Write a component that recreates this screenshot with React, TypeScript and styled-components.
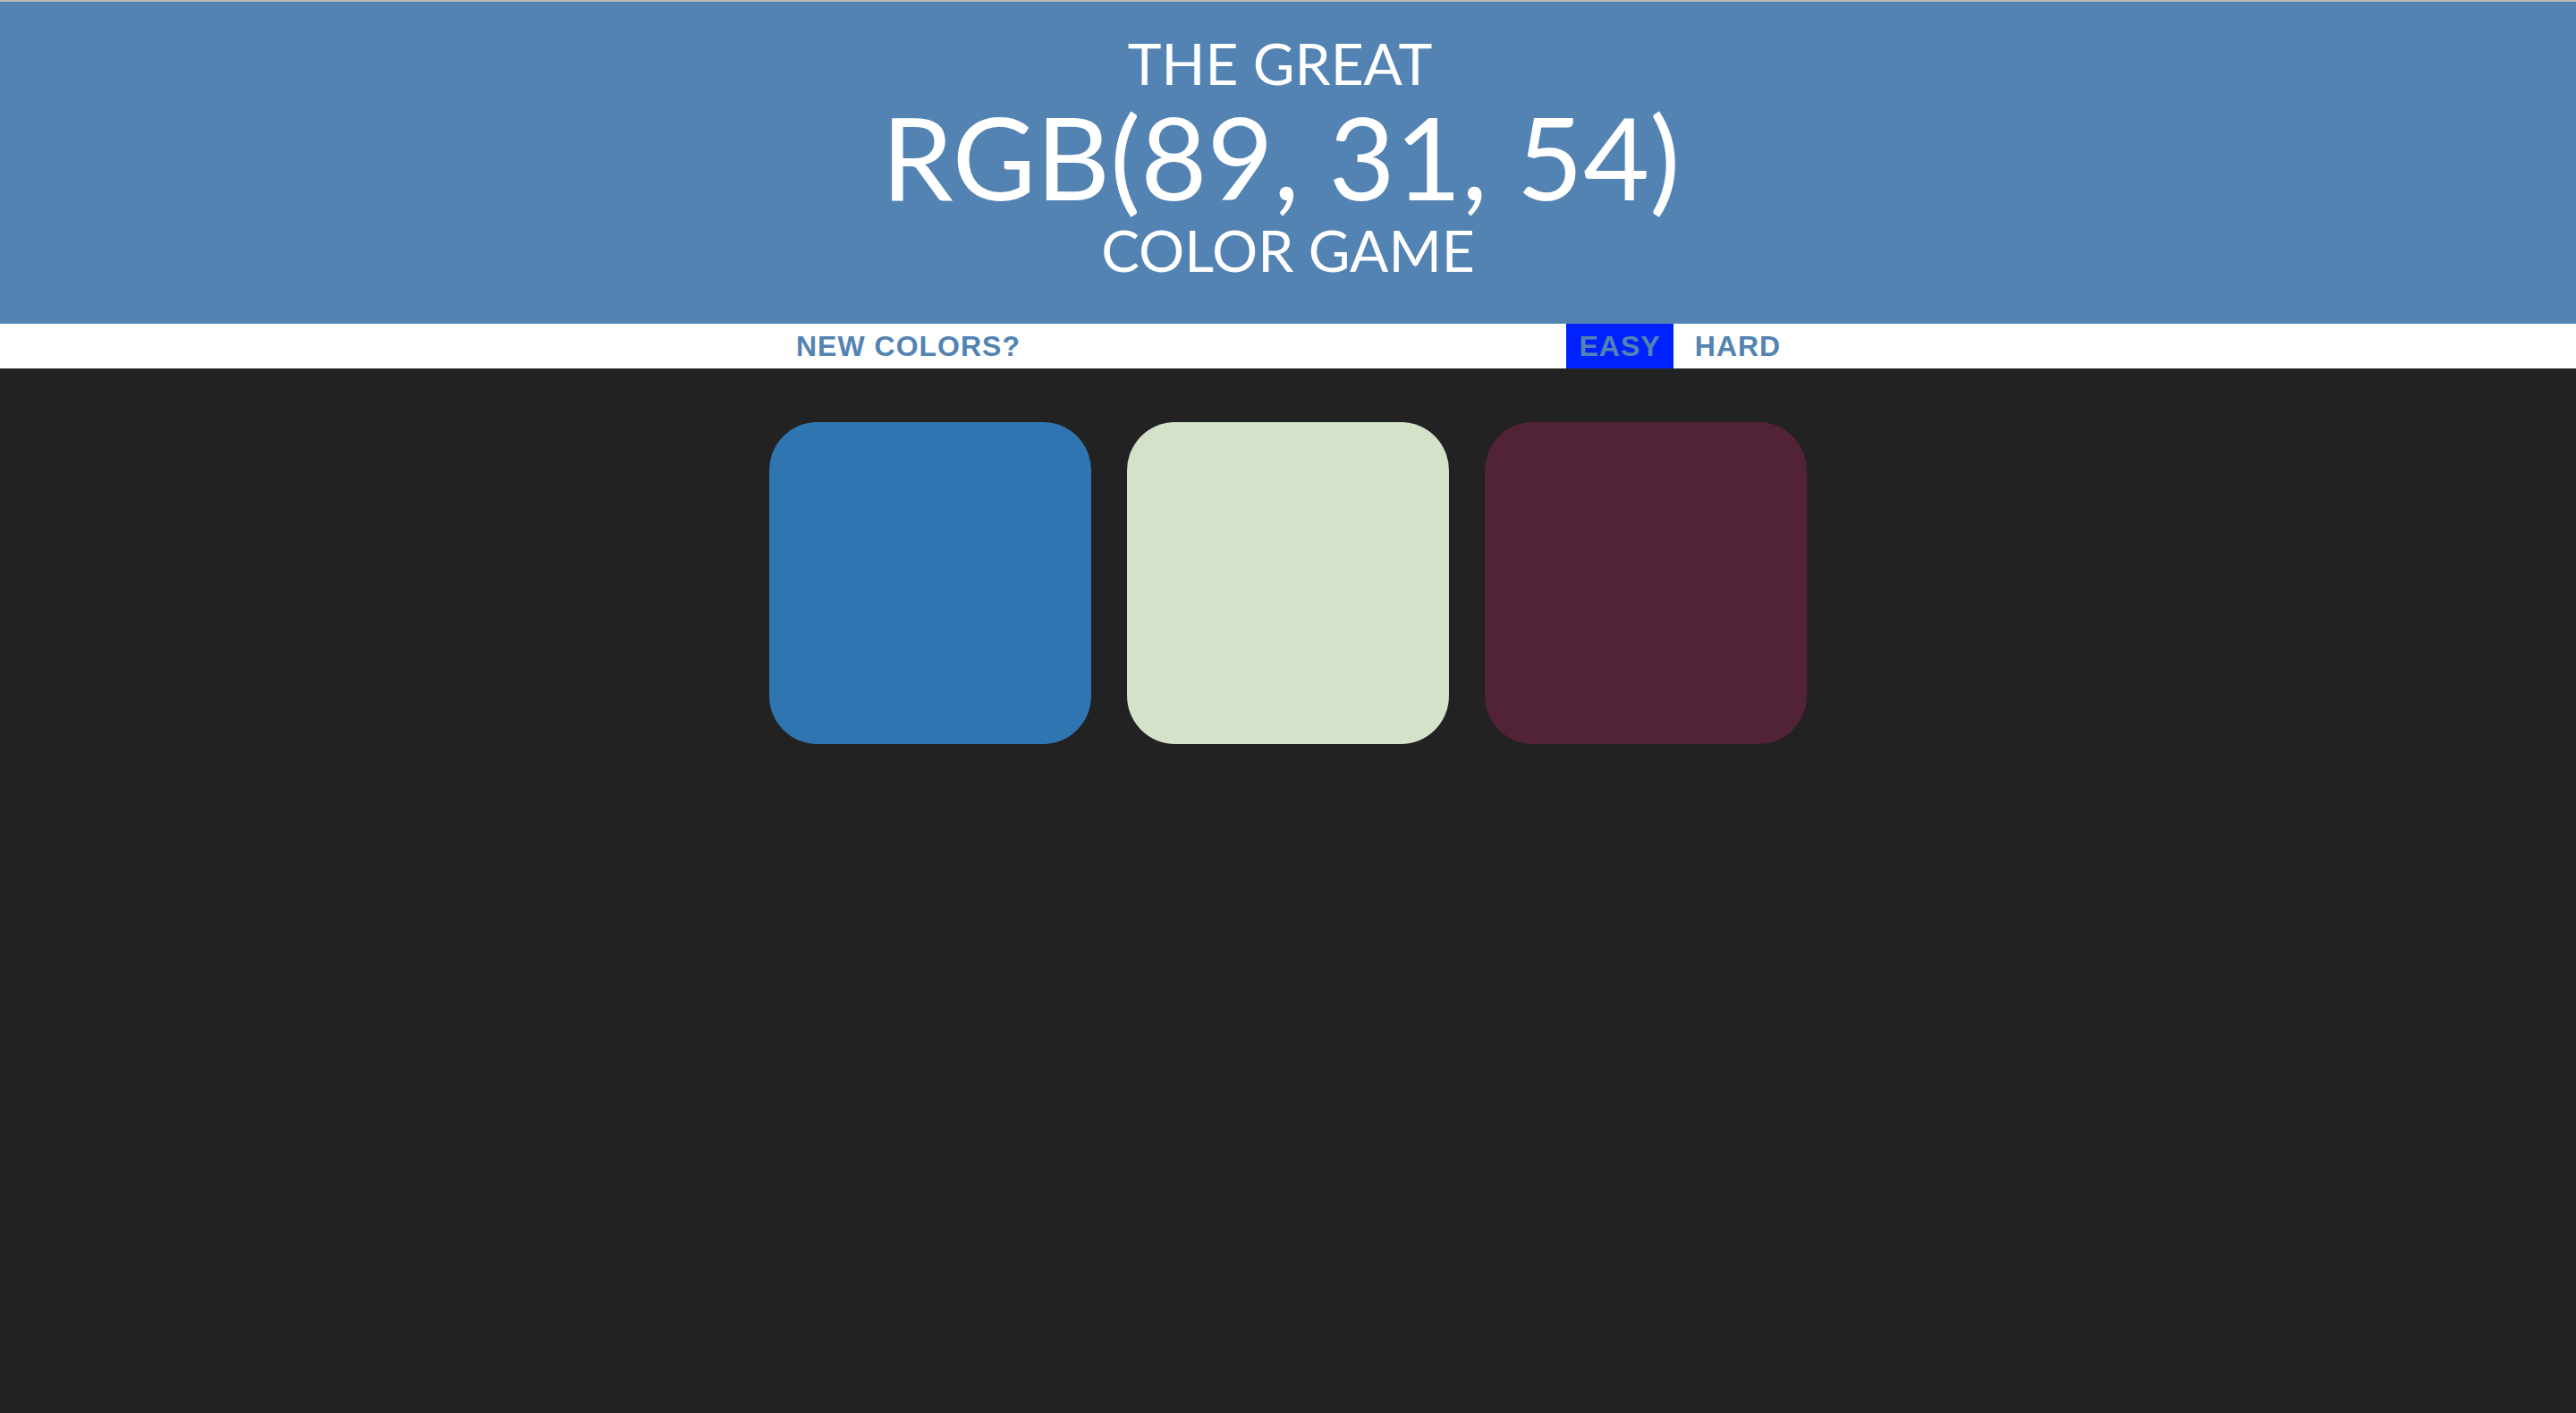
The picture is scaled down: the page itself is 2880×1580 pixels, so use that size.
import React from "react";
import styled, { createGlobalStyle } from "styled-components";

const Global = createGlobalStyle`
  html, body {
    margin: 0;
    padding: 0;
    background: #222222;
    font-family: Lato, "Noto Sans", sans-serif;
  }
`;

const Page = styled.div`
  min-height: 1580px;
  background: #222222;
  border-top: 2px solid #b8b8b8;
  box-sizing: border-box;
`;

const Title = styled.h1`
  margin: 0;
  padding: 34px 0 47px;
  background: #5383b3;
  color: #ffffff;
  text-align: center;
  text-transform: uppercase;
  font-weight: 400;
  font-size: 64px;
  line-height: 1.1;
`;

const TitleLine = styled.div<{ $shift?: number }>`
  padding-right: ${(p) => (p.$shift ?? 0) * 2}px;
`;

const ColorDisplay = styled.div`
  font-size: 128px;
  line-height: 1.08;
  padding-right: 16px;
`;

const Stripe = styled.div`
  height: 50px;
  background: #ffffff;
  display: flex;
  justify-content: center;
  align-items: stretch;
`;

const StripeButton = styled.button<{ $width: number; $selected?: boolean }>`
  width: ${(p) => p.$width}px;
  height: 100%;
  border: none;
  padding: 0;
  margin: 0;
  background: ${(p) => (p.$selected ? "#0022ff" : "transparent")};
  color: #5383b3;
  font-family: "Liberation Sans", Arial, sans-serif;
  font-weight: 700;
  font-size: 32px;
  letter-spacing: 1px;
  text-transform: uppercase;
  cursor: pointer;
  outline: none;
`;

const Message = styled.span<{ $width: number }>`
  display: block;
  width: ${(p) => p.$width}px;
`;

const Gap = styled.span`
  display: block;
  width: 12px;
`;

const Container = styled.div`
  max-width: 1200px;
  margin: 40px auto;
  display: flex;
  flex-wrap: wrap;
`;

const Square = styled.div<{ $color: string }>`
  width: 360px;
  height: 360px;
  margin: 20px;
  border-radius: 54px;
  background: ${(p) => p.$color};
`;

const colors = ["#2f75b2", "#d4e2c9", "#522236"];

export default function App() {
  return (
    <>
      <Global />
      <Page>
        <Title>
          <TitleLine $shift={9}>The Great</TitleLine>
          <ColorDisplay>RGB(89, 31, 54)</ColorDisplay>
          <TitleLine>Color Game</TitleLine>
        </Title>
        <Stripe>
          <StripeButton $width={277}>New Colors?</StripeButton>
          <Message $width={597} />
          <StripeButton $width={120} $selected>
            Easy
          </StripeButton>
          <Gap />
          <StripeButton $width={120}>Hard</StripeButton>
        </Stripe>
        <Container>
          {colors.map((c) => (
            <Square key={c} $color={c} />
          ))}
        </Container>
      </Page>
    </>
  );
}
